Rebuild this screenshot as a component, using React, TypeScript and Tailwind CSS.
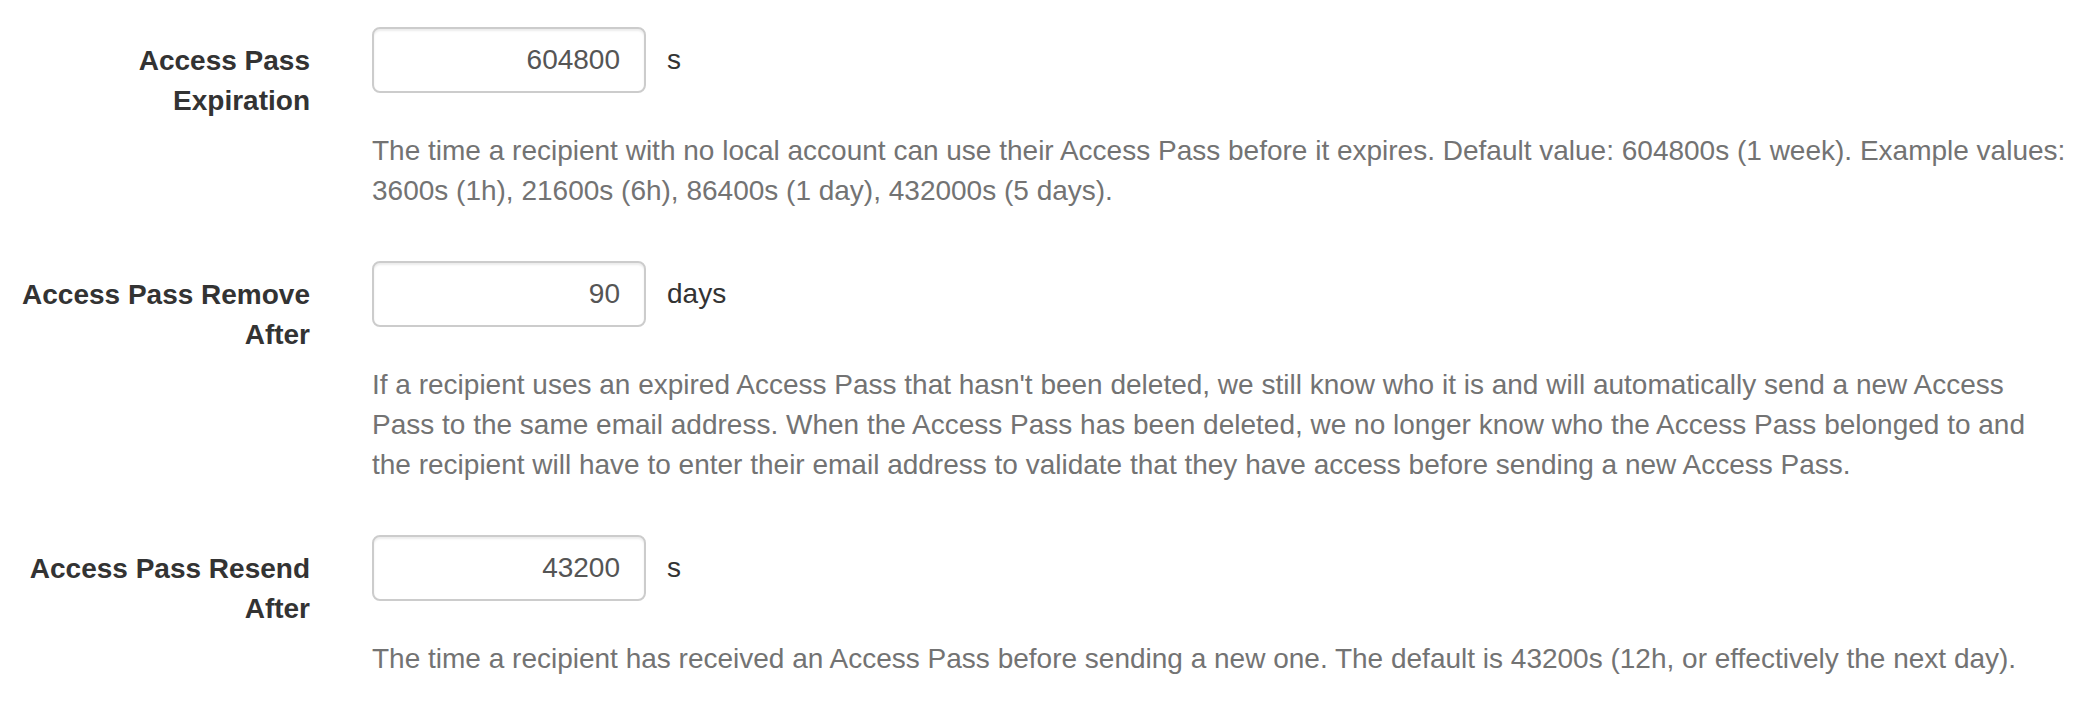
import React from "react";

type Setting = {
  label: string;
  value: string;
  unit: string;
  help: string[];
};

const settings: Setting[] = [
  {
    label: "Access Pass Expiration",
    value: "604800",
    unit: "s",
    help: [
      "The time a recipient with no local account can use their Access Pass before it expires. Default value: 604800s (1 week). Example values:",
      "3600s (1h), 21600s (6h), 86400s (1 day), 432000s (5 days).",
    ],
  },
  {
    label: "Access Pass Remove After",
    value: "90",
    unit: "days",
    help: [
      "If a recipient uses an expired Access Pass that hasn't been deleted, we still know who it is and will automatically send a new Access",
      "Pass to the same email address. When the Access Pass has been deleted, we no longer know who the Access Pass belonged to and",
      "the recipient will have to enter their email address to validate that they have access before sending a new Access Pass.",
    ],
  },
  {
    label: "Access Pass Resend After",
    value: "43200",
    unit: "s",
    help: [
      "The time a recipient has received an Access Pass before sending a new one. The default is 43200s (12h, or effectively the next day).",
    ],
  },
];

const SettingRow: React.FC<{ setting: Setting }> = ({ setting }) => (
  <div className="grid grid-cols-[310px_1fr] gap-x-[62px] mb-[50px]">
    <label className="pt-[14px] text-right font-bold text-[#333] leading-[40px]">
      {setting.label}
    </label>
    <div>
      <div className="flex items-center">
        <input
          type="text"
          defaultValue={setting.value}
          className="h-[66px] w-[274px] rounded-[8px] border-2 border-[#cccccc] bg-white px-[24px] text-right text-[#555] shadow-[inset_0_2px_2px_rgba(0,0,0,0.075)] outline-none"
        />
        <span className="ml-[21px] text-[#333]">{setting.unit}</span>
      </div>
      <p className="mt-[38px] text-[#737373] leading-[40px] whitespace-nowrap">
        {setting.help.map((line, i) => (
          <React.Fragment key={i}>
            {i > 0 && <br />}
            {line}
          </React.Fragment>
        ))}
      </p>
    </div>
  </div>
);

const App: React.FC = () => {
  return (
    <div
      className="min-h-screen bg-white pt-[27px] pr-[16px] text-[28px]"
      style={{ fontFamily: '"Liberation Sans", Arial, sans-serif' }}
    >
      {settings.map((s) => (
        <SettingRow key={s.label} setting={s} />
      ))}
    </div>
  );
};

export default App;
